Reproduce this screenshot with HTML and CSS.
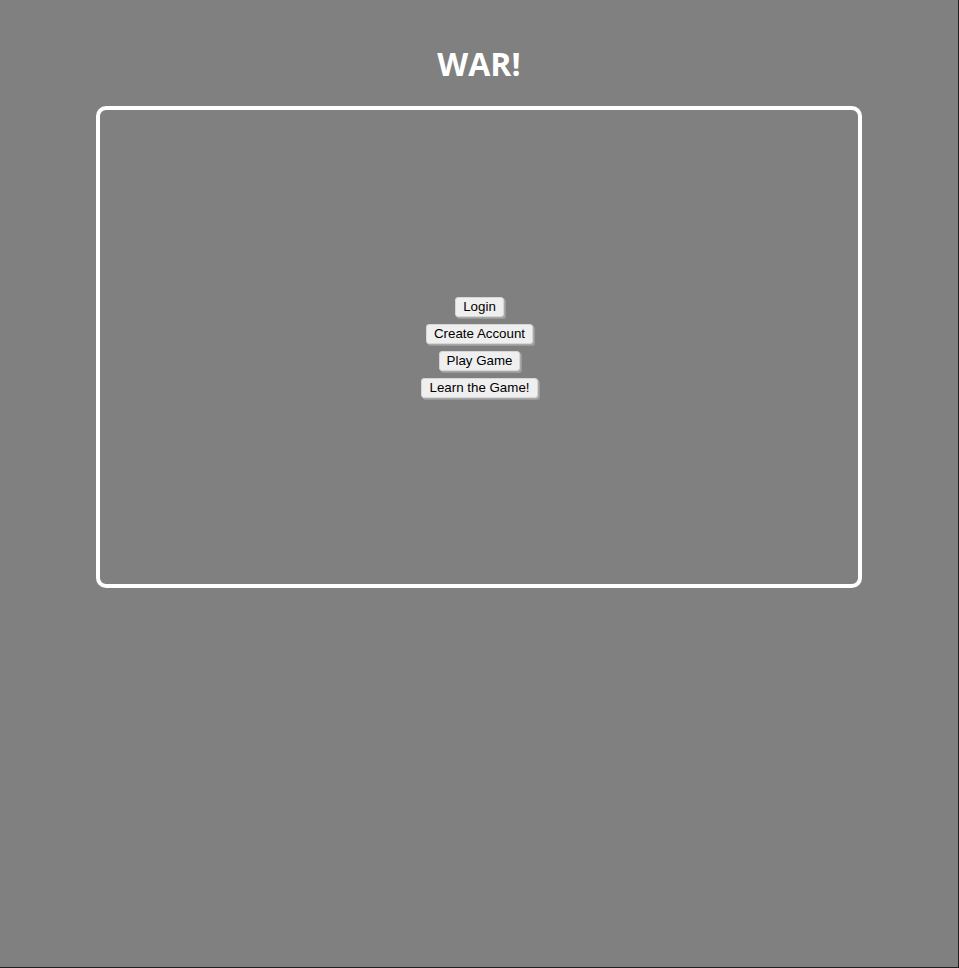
FILE: index.html
```html
<!DOCTYPE html>
<html>
<head>
<meta charset="utf-8">
<title>WAR!</title>
<link rel="stylesheet" href="styles.css">
</head>
<body>
<div class="page">
  <h1 class="title">WAR!</h1>
  <div class="board">
    <div class="menu">
      <button class="btn">Login</button>
      <button class="btn">Create Account</button>
      <button class="btn">Play Game</button>
      <button class="btn">Learn the Game!</button>
    </div>
  </div>
</div>
</body>
</html>
```
FILE: styles.css
```css
html, body {
  margin: 0;
  padding: 0;
  height: 100%;
}
html {
  background: #808080;
}
.page {
  box-sizing: border-box;
  height: 100%;
  border-right: 1px solid #1e1e1e;
  border-bottom: 1px solid #1e1e1e;
  display: flex;
  flex-direction: column;
  align-items: center;
  padding-top: 44px;
}
.title {
  margin: 0;
  color: #fff;
  font-family: "Open Sans", sans-serif;
  font-weight: 700;
  font-size: 32px;
  line-height: 40px;
  letter-spacing: 0;
}
.board {
  margin-top: 22px;
  box-sizing: border-box;
  width: 766px;
  height: 482px;
  border: 4px solid #fff;
  border-radius: 10px;
  display: flex;
  align-items: center;
  justify-content: center;
}
.menu {
  display: flex;
  flex-direction: column;
  align-items: center;
  gap: 7px;
}
.btn {
  font-family: "Liberation Sans", Arial, sans-serif;
  font-size: 13.333px;
  color: #000;
  background: #efefef;
  border: 1px solid #d6d6d6;
  border-radius: 3px;
  box-shadow: 1px 1px 0 #a8a8a8, 2px 2px 0 #9a9a9a;
  padding: 1px 7px;
  height: 20px;
  line-height: 16px;
  margin-left: 1px;
}
```
